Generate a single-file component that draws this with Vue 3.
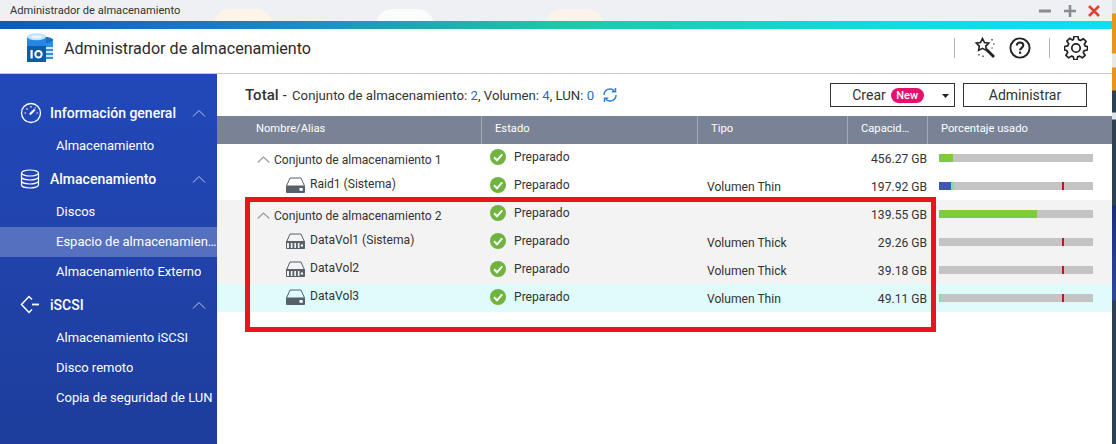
<script setup>
const nav = [
  { title: 'Información general', icon: 'gauge', items: [{ t: 'Almacenamiento' }] },
  { title: 'Almacenamiento', icon: 'db', items: [{ t: 'Discos' }, { t: 'Espacio de almacenamiento', on: true }, { t: 'Almacenamiento Externo' }] },
  { title: 'iSCSI', icon: 'iscsi', items: [{ t: 'Almacenamiento iSCSI' }, { t: 'Disco remoto' }, { t: 'Copia de seguridad de LUN' }] }
]
const rows = [
  { name: 'Conjunto de almacenamiento 1', pool: true, type: '', cap: '456.27 GB', segs: [{ w: 14, c: '#7fcb3e' }] },
  { name: 'Raid1 (Sistema)', icon: 'thin', type: 'Volumen Thin', cap: '197.92 GB', segs: [{ w: 12, c: '#3f59b1' }, { w: 3, c: '#82dfa4' }], mark: true },
  { name: 'Conjunto de almacenamiento 2', pool: true, tone: 'grey', type: '', cap: '139.55 GB', segs: [{ w: 98, c: '#7fcb3e' }] },
  { name: 'DataVol1 (Sistema)', icon: 'thick', tone: 'grey', type: 'Volumen Thick', cap: '29.26 GB', segs: [], mark: true },
  { name: 'DataVol2', icon: 'thick', tone: 'grey', type: 'Volumen Thick', cap: '39.18 GB', segs: [], mark: true },
  { name: 'DataVol3', icon: 'thin', tone: 'cyan', type: 'Volumen Thin', cap: '49.11 GB', segs: [{ w: 2, c: '#82dfa4' }], mark: true }
]
</script>

<template>
  <div class="page">
    <div class="window">
      <div class="titlebar">
        <span class="blob b1"></span><span class="blob b2"></span><span class="blob b3"></span>
        <span class="wintitle">Administrador de almacenamiento</span>
        <div class="winctl">
          <svg class="minus" width="12" height="12" viewBox="0 0 12 12"><rect x="0" y="4.5" width="12" height="3" fill="#888d94"/></svg>
          <svg width="12" height="12" viewBox="0 0 12 12"><path d="M0 4.700h4.700V0h2.600v4.700H12v2.600H7.300V12H4.700V7.300H0z" fill="#888d94"/></svg>
          <svg width="12" height="12" viewBox="0 0 12 12"><path d="M1 1l10 10M11 1L1 11" stroke="#e2443c" stroke-width="2.600"/></svg>
        </div>
      </div>
      <div class="gradient"></div>
      <header class="apphead">
        <svg class="logo" width="28" height="30" viewBox="0 0 28 30">
          <path d="M9 6h18v20H9z" fill="#2f8fe0"/>
          <ellipse cx="18" cy="7" rx="9" ry="3.200" fill="#1c6fc9"/>
          <path d="M1 3.500v10c0 2 4 4 9.500 4s9.500-2 9.500-4v-10z" fill="#2487e4"/>
          <ellipse cx="10.500" cy="3.800" rx="9.500" ry="3.500" fill="#bfe3fb"/>
          <ellipse cx="10.500" cy="3.800" rx="5.500" ry="1.600" fill="#eaf6ff"/>
          <path d="M20 14h7v2h-7zM20 18h7v2h-7zM20 22h7v2h-7z" fill="#cfe6fa"/>
          <rect x="1" y="13" width="19" height="16" fill="#0d5ca8"/>
          <rect x="4.500" y="17" width="2.200" height="8.500" fill="#fff"/>
          <circle cx="12.500" cy="21.200" r="3.200" fill="none" stroke="#fff" stroke-width="2"/>
        </svg>
        <h1 class="apptitle">Administrador de almacenamiento</h1>
        <div class="headtools">
          <span class="vsep"></span>
          <svg class="wand" width="22" height="22" viewBox="0 0 22 22" fill="none" stroke="#222" stroke-width="1.600">
            <path d="M8.500 1.500l2 4 4.300.6-3 3 .7 4.300-4-2-3.900 2 .7-4.300-3-3 4.200-.6z" fill="#fff"/>
            <path d="M12.500 12.500l7.500 7.500" stroke-width="2.800"/>
            <path d="M18 2v1.500M20.500 7h-1.500M17.500 11h1.200M5 17v1.500M9 18.500v1.500" stroke-width="1.200"/>
          </svg>
          <svg class="help" width="22" height="22" viewBox="0 0 22 22">
            <circle cx="11" cy="11" r="9.600" fill="none" stroke="#222" stroke-width="1.900"/>
            <path d="M7.800 8.600c0-2 1.400-3.100 3.300-3.100s3.200 1.100 3.200 2.800c0 2.500-3.200 2.500-3.200 5" fill="none" stroke="#222" stroke-width="2.100"/>
            <rect x="10" y="14.600" width="2.200" height="2.200" fill="#222"/>
          </svg>
          <span class="vsep second"></span>
          <svg class="gear" width="24" height="24" viewBox="0 0 24 24" fill="none" stroke="#222" stroke-width="1.700" stroke-linejoin="round">
            <path d="M10 1h4l.6 3.100 2 .9 2.700-1.800 2.800 2.800-1.800 2.700.9 2L23.500 11v3.500l-3.300.6-.9 2 1.800 2.700-2.800 2.500-2.700-1.700-2 .8-.6 3H10l-.6-3-2-.8-2.700 1.700-2.800-2.500 1.800-2.700-.9-2L.500 14.500V11l3.300-.7.900-2L2.900 5.600l2.800-2.800L8.400 4.600l1-.5z" transform="translate(0 -.500)"/>
            <circle cx="12" cy="12" r="4.200"/>
          </svg>
        </div>
      </header>
      <div class="body">
        <nav class="sidebar">
          <section v-for="g in nav" :key="g.title">
            <div class="navhead">
              <span class="navicon">
                <svg v-if="g.icon === 'gauge'" width="22" height="22" viewBox="0 0 22 22" fill="none" stroke="#fff" stroke-width="1.300">
                  <circle cx="11" cy="11" r="9.500"/>
                  <path d="M9.800 12.500l5-5" stroke-width="2"/>
                  <path d="M4.500 11h1.500M6.500 6.500l1 1M11 4v1.500M15.500 5.500l-.6.800M16.500 11H18" stroke-width="1.200"/>
                </svg>
                <svg v-else-if="g.icon === 'db'" width="20" height="20" viewBox="0 0 20 20" fill="none" stroke="#fff" stroke-width="1.200">
                  <ellipse cx="10" cy="4" rx="8.500" ry="3"/>
                  <path d="M1.500 4v12c0 1.700 3.800 3 8.500 3s8.500-1.300 8.500-3V4"/>
                  <path d="M1.500 8c0 1.700 3.800 3 8.500 3s8.500-1.300 8.500-3M1.500 12c0 1.700 3.800 3 8.500 3s8.500-1.300 8.500-3"/>
                </svg>
                <svg v-else width="20" height="20" viewBox="0 0 20 20" fill="none" stroke="#fff" stroke-width="1.500">
                  <path d="M12 4.500L9 1.500 1.500 9.500 9 17.500l3-3"/>
                  <path d="M12 9.500h7" stroke-width="1.800"/>
                </svg>
              </span>
              <span class="navtitle">{{ g.title }}</span>
              <svg class="navchev" width="14" height="8" viewBox="0 0 14 8" fill="none" stroke="#b9c6ea" stroke-width="1"><path d="M1 7.500l6-6 6 6"/></svg>
            </div>
            <div v-for="i in g.items" :key="i.t" class="navsub" :class="{ on: i.on }"><span>{{ i.t }}</span></div>
          </section>
        </nav>
        <main class="main">
          <div class="toolbar">
            <div class="summary">
              <strong>Total</strong>
              <b class="dash">-</b>
              <span>Conjunto de almacenamiento: <em>2</em>, Volumen: <em>4</em>, LUN: <em>0</em></span>
              <svg class="refresh" width="16" height="16" viewBox="0 0 16 16" fill="none" stroke="#2b82d9" stroke-width="1.500">
                <path d="M2 8a6 6 0 0 1 10.300-4.200"/><path d="M14 8a6 6 0 0 1-10.300 4.200"/>
                <path d="M13.500 1v3.800H9.800M2.500 15v-3.800h3.700"/>
              </svg>
            </div>
            <div class="actions">
              <button class="btn create">
                <span class="createlabel">Crear <i class="newbadge">New</i></span>
                <svg class="caret" width="7" height="4" viewBox="0 0 7 4"><path d="M0 0h7L3.500 4z" fill="#222"/></svg>
              </button>
              <button class="btn admin">Administrar</button>
            </div>
          </div>
          <div class="grid ghead">
            <div class="hc first">Nombre/Alias</div>
            <div class="hc">Estado</div>
            <div class="hc">Tipo</div>
            <div class="hc"><span class="clip">Capacidad</span></div>
            <div class="hc">Porcentaje usado</div>
          </div>
          <div v-for="r in rows" :key="r.name" class="grid row" :class="[r.tone, { pool: r.pool }]">
            <div class="c name" :class="{ child: !r.pool }">
              <svg v-if="r.pool" class="treechev" width="13" height="7" viewBox="0 0 13 7" fill="none" stroke="#9a9a9a" stroke-width="1.100"><path d="M.7 6.500L6.500 1l5.800 5.500"/></svg>
              <svg v-else-if="r.icon === 'thin'" class="vol" width="19" height="16" viewBox="0 0 19 16">
                <path d="M.5 9L4 1h11l3.500 8" fill="none" stroke="#58606b"/>
                <rect x="0" y="8.500" width="19" height="7.500" rx="1" fill="#58606b"/>
                <rect x="13.500" y="11" width="3.200" height="2.800" fill="#fff"/>
              </svg>
              <svg v-else class="vol" width="19" height="16" viewBox="0 0 19 16">
                <path d="M.5 9L4 1h11l3.500 8v6.500H.5z" fill="none" stroke="#58606b"/>
                <rect x="0" y="8" width="19" height="2" fill="#58606b"/>
                <path d="M3 10h1.800v5.500H3zM6.500 10h1.800v5.500H6.500zM10 10h1.800v5.500H10z" fill="#58606b"/>
                <rect x="13.500" y="10" width="5" height="5.500" fill="#58606b"/>
                <rect x="14.800" y="11.500" width="2.200" height="2" fill="#fff"/>
              </svg>
              <span>{{ r.name }}</span>
            </div>
            <div class="c status">
              <svg width="16" height="16" viewBox="0 0 16 16">
                <circle cx="8" cy="8" r="8" fill="#6fb43f"/>
                <path d="M4 8.300l3 3 5.200-6" fill="none" stroke="#fff" stroke-width="2"/>
              </svg>
              <span>Preparado</span>
            </div>
            <div class="c type">{{ r.type }}</div>
            <div class="c cap">{{ r.cap }}</div>
            <div class="c usage">
              <div class="bar">
                <i v-for="(s, n) in r.segs" :key="n" class="seg" :style="{ width: s.w + 'px', background: s.c }"></i>
                <i v-if="r.mark" class="mark"></i>
              </div>
            </div>
          </div>
          <div class="highlight"></div>
        </main>
      </div>
    </div>
    <div class="strip"></div>
  </div>
</template>

<style>
html, body { margin: 0; padding: 0; background: #2f4050; }
</style>

<style scoped>
.page { display: flex; width: 1116px; height: 444px; overflow: hidden; font-family: Roboto, "Liberation Sans", sans-serif; color: #333; }
.window { width: 1112px; display: flex; flex-direction: column; background: #fff; }
.strip { width: 4px; background: linear-gradient(180deg, #dfe3e8 0, #dfe3e8 13px, #e8951f 14px, #e8951f 53px, #e8e8e8 54px, #e8e8e8 67px, #e8951f 68px, #e8951f 90px, #2f4050 91px, #2f4050 112px, #dfe7ee 113px, #dfe7ee 119px, #2f4050 120px, #2f4050 205px, #1b2f78 206px, #2a4a9a 300px, #2f4050 301px, #2f4050 100%); }
.titlebar { position: relative; height: 21px; flex: none; background: #eef0f4; display: flex; align-items: center; padding: 0 12px 0 10px; justify-content: space-between; overflow: hidden; }
.blob { position: absolute; top: 9px; width: 58px; height: 24px; border-radius: 16px 16px 0 0; }
.b1 { left: 214px; background: #fdf5e9; }
.b2 { left: 376px; background: #fbfcfc; }
.b3 { left: 546px; background: #fcf3ea; }
.wintitle { position: relative; font-size: 11.100px; color: #333; }
.winctl { position: relative; display: flex; gap: 12px; align-items: center; }
.minus { margin-right: 1px; }
.gradient { height: 8px; flex: none; background: linear-gradient(90deg, #1458bb 0, #1878c8 200px, #1fc8a5 560px, #0fdde0 900px, #0ce0ec 100%); }
.apphead { flex: none; box-sizing: content-box; display: flex; align-items: center; padding: 0 24px 6px 26px; border-bottom: 1px solid #c9c9c9; height: 38px; }
.logo { flex: none; }
.apptitle { margin: 0 0 0 10px; font-size: 16.100px; font-weight: 400; color: #2b2b2b; flex: 1; }
.headtools { display: flex; align-items: center; }
.vsep { width: 1px; height: 20px; background: #b5b5b5; margin-right: 19px; }
.vsep.second { margin: 0 14px 0 18px; }
.wand { margin-right: 13px; }
.body { flex: 1; display: flex; min-height: 0; }
.sidebar { width: 217px; flex: none; padding-top: 21px; box-sizing: border-box; background: linear-gradient(180deg, #2248b9 0, #1e3d9c 100%); color: #fff; }
.navhead { height: 36px; display: flex; align-items: center; padding-left: 20px; }
.navicon { width: 30px; flex: none; display: flex; align-items: center; }
.navtitle { flex: 1; font-size: 14px; font-weight: 500; }
.navchev { margin-right: 11px; }
.navsub { height: 30px; box-sizing: border-box; padding-bottom: 2px; display: flex; align-items: center; padding-left: 56px; font-size: 13px; }
.navsub span { overflow: hidden; white-space: nowrap; text-overflow: ellipsis; }
.navsub.on { background: #5470bf; }
.main { position: relative; flex: 1; min-width: 0; display: flex; flex-direction: column; }
.toolbar { height: 42px; flex: none; display: flex; align-items: center; justify-content: space-between; padding: 0 25px 0 28px; }
.summary { display: flex; align-items: center; font-size: 13.200px; color: #333; }
.summary strong { font-size: 15px; font-weight: 500; }
.dash { margin: 0 5px 0 4px; font-weight: 500; }
.summary em { font-style: normal; color: #1f6fc0; }
.refresh { margin-left: 8px; }
.actions { display: flex; gap: 8px; }
.btn { height: 24px; width: 125px; box-sizing: border-box; background: #fff; border: 1px solid #333; font: inherit; font-size: 14px; color: #333; padding: 0; display: flex; align-items: center; justify-content: center; position: relative; }
.btn.admin { width: 124px; }
.createlabel { display: flex; align-items: center; gap: 5px; margin-left: -9px; }
.newbadge { background: #e5116d; color: #fff; font-style: normal; font-weight: 500; font-size: 11px; height: 15px; line-height: 15px; width: 33px; text-align: center; border-radius: 8px; }
.caret { position: absolute; right: 5px; top: 10px; }
.grid { display: grid; grid-template-columns: 264px 216px 150px 80px 184px; }
.ghead { height: 28px; flex: none; background: #7a8395; color: #fff; font-size: 11.200px; }
.hc { display: flex; align-items: center; padding-left: 13px; padding-bottom: 3px; box-sizing: border-box; border-left: 1px solid #a3aab6; min-width: 0; }
.hc.first { border-left: 0; padding-left: 39px; }
.clip { width: 52px; overflow: hidden; white-space: nowrap; text-overflow: ellipsis; }
.row { height: 28px; font-size: 12.100px; color: #333; }
.row.grey { background: #f3f3f3; }
.row.cyan { background: #e0fbfb; }
.c { display: flex; align-items: center; min-width: 0; white-space: nowrap; box-sizing: border-box; }
.name { padding-left: 40px; padding-top: 3px; }
.name.child { padding-left: 69px; padding-top: 0; padding-bottom: 5px; }
.treechev { margin-right: 4px; }
.vol { margin-right: 5px; margin-top: 3px; }
.status { padding-left: 9px; padding-bottom: 2px; gap: 8px; }
.type { padding-left: 10px; padding-top: 1px; }
.cap { justify-content: flex-end; padding-top: 1px; }
.usage { padding-left: 12px; }
.bar { position: relative; width: 154px; height: 8px; background: #c4c4c4; display: flex; }
.seg { display: block; height: 100%; }
.mark { position: absolute; left: 122.500px; top: 0; width: 2px; height: 100%; background: #c8111c; }
.highlight { position: absolute; left: 28px; top: 123px; width: 691px; height: 135px; box-sizing: border-box; border: 5px solid #e8141f; pointer-events: none; }
</style>
